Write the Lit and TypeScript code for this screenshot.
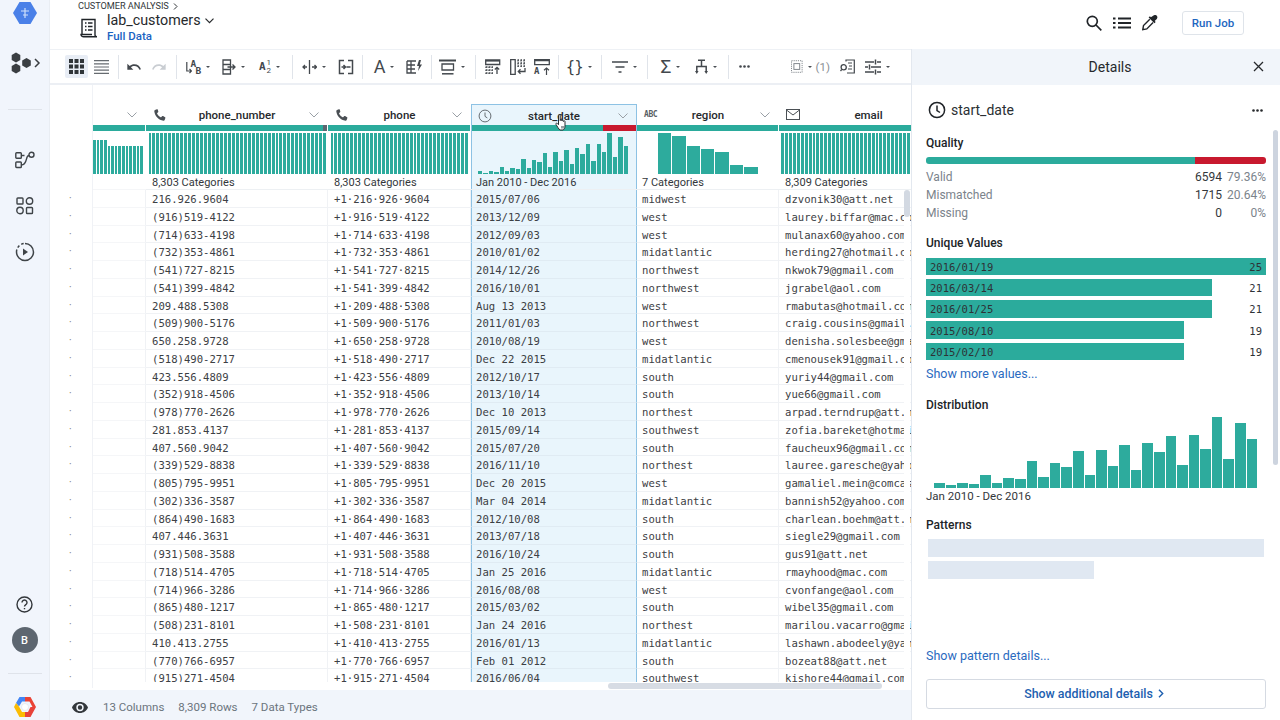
import { LitElement, html, svg, css } from "lit";
import { customElement } from "lit/decorators.js";

const phones = `216.926.9604|(916)519-4122|(714)633-4198|(732)353-4861|(541)727-8215|(541)399-4842|209.488.5308|(509)900-5176|650.258.9728|(518)490-2717|423.556.4809|(352)918-4506|(978)770-2626|281.853.4137|407.560.9042|(339)529-8838|(805)795-9951|(302)336-3587|(864)490-1683|407.446.3631|(931)508-3588|(718)514-4705|(714)966-3286|(865)480-1217|(508)231-8101|410.413.2755|(770)766-6957|(915)271-4504`.split("|");
const phone2 = phones.map((p) => {
  const d = p.replace(/\D/g, "");
  return `+1·${d.slice(0, 3)}·${d.slice(3, 6)}·${d.slice(6)}`;
});
const dates = `2015/07/06|2013/12/09|2012/09/03|2010/01/02|2014/12/26|2016/10/01|Aug 13 2013|2011/01/03|2010/08/19|Dec 22 2015|2012/10/17|2013/10/14|Dec 10 2013|2015/09/14|2015/07/20|2016/11/10|Dec 20 2015|Mar 04 2014|2012/10/08|2013/07/18|2016/10/24|Jan 25 2016|2016/08/08|2015/03/02|Jan 24 2016|2016/01/13|Feb 01 2012|2016/06/04`.split("|");
const regions = `midwest|west|west|midatlantic|northwest|northwest|west|northwest|west|midatlantic|south|south|northest|southwest|south|northest|west|midatlantic|south|south|south|midatlantic|west|south|northest|midatlantic|south|southwest`.split("|");
const emails = `dzvonik30@att.net|laurey.biffar@mac.com|mulanax60@yahoo.com|herding27@hotmail.com|nkwok79@gmail.com|jgrabel@aol.com|rmabutas@hotmail.com|craig.cousins@gmail.com|denisha.solesbee@gmail.com|cmenousek91@gmail.com|yuriy44@gmail.com|yue66@gmail.com|arpad.terndrup@att.net|zofia.bareket@hotmail.com|faucheux96@gmail.com|lauree.garesche@yahoo.com|gamaliel.mein@comcast.net|bannish52@yahoo.com|charlean.boehm@att.net|siegle29@gmail.com|gus91@att.net|rmayhood@mac.com|cvonfange@aol.com|wibel35@gmail.com|marilou.vacarro@gmail.com|lashawn.abodeely@yahoo.com|bozeat88@att.net|kishore44@gmail.com`.split("|");

const dist = [5, 2.3, 5, 4, 12.3, 5, 9.7, 8.7, 26.3, 10.3, 24.3, 20.3, 36.3, 13, 37.3, 22, 42.3, 17.7, 44.3, 35.3, 51.3, 22.7, 52.3, 39, 71, 29, 64.7, 48.7];

const fill = (n: number, h: number) => Array.from({ length: n }, () => h);

type Col = {
  name: string; w: number; icon: any; headW: number; chev: boolean; sel?: boolean; pad: number;
  bars: number[]; histL: number; histW: number; histGap: number;
  summary: string; cells: string[]; q: [number, number, number];
};

const phoneIc = html`<svg width="14" height="14" viewBox="0 0 24 24"><path fill="#4a4f54" d="M6.6 2.2 3.4 3.4c-.8.3-1.3 1.1-1.2 2 1 8.5 7.3 15 15.8 16.3.9.1 1.7-.4 2-1.2l1.2-3.3c.2-.6 0-1.2-.5-1.5l-3.400-1.900c-.6-.3-1.3-.2-1.7.3l-1.3 1.5c-.3.3-.8.4-1.2.2-2.8-1.5-4.7-3.4-6-6-.2-.4-.1-.9.2-1.2l1.400-1.300c.5-.4.6-1.100.3-1.700L8.100 2.700c-.3-.5-.9-.7-1.500-.5z"/></svg>`;
const clockIc = (s: number, c: string, sw: number) => html`<svg width="${s}" height="${s}" viewBox="0 0 18 18" fill="none" stroke="${c}" stroke-width="${sw}"><circle cx="9" cy="9" r="7.6"/><path d="M9 4.5V9.5l3 2"/></svg>`;
const abcIc = html`<span class="abc">ABC</span>`;
const mailIc = html`<svg width="14" height="11" viewBox="0 0 14 11" fill="none" stroke="#4a4f54" stroke-width="1"><rect x=".5" y=".5" width="13" height="10"/><path d="M.5 1l6.5 5 6.5-5"/></svg>`;

const columns: Col[] = [
  { name: "", w: 53, icon: null, headW: 53, pad: 6, chev: true, bars: [...fill(4, 34), ...fill(10, 28)], histL: 0, histW: 50, histGap: 1, summary: "", cells: fill(28, 0).map(() => ""), q: [1, 0, 0] },
  { name: "phone_number", w: 182, icon: phoneIc, headW: 182, pad: 6, chev: true, bars: fill(45, 41), histL: 2.5, histW: 177.5, histGap: 1, summary: "8,303 Categories", cells: phones, q: [175, 4, 0] },
  { name: "phone", w: 143, icon: phoneIc, headW: 143, pad: 6, chev: true, bars: fill(35, 41), histL: 2.5, histW: 137.5, histGap: 1, summary: "8,303 Categories", cells: phone2, q: [1, 0, 0] },
  { name: "start_date", w: 166, icon: clockIc(14, "#5d6368", 1.2), headW: 166, pad: 5, chev: true, sel: true, bars: dist.map((d) => d * 0.577), histL: 7, histW: 150, histGap: 1, summary: "Jan 2010 - Dec 2016", cells: dates, q: [131, 0, 33] },
  { name: "region", w: 142, icon: abcIc, headW: 142, pad: 5, chev: true, bars: [40.7, 38.3, 27.7, 24.7, 21.7, 9, 7], histL: 21, histW: 99.5, histGap: 1, summary: "7 Categories", cells: regions, q: [1, 0, 0] },
  { name: "email", w: 300, icon: mailIc, headW: 179, pad: 6, chev: false, bars: fill(33, 41), histL: 2, histW: 129, histGap: 1, summary: "8,309 Categories", cells: emails, q: [1, 0, 0] },
];

const caret = html`<i class="caret"></i>`;
const T = (w: number, body: any, c = false) => ({ w, body, c });
const S = (w: number) => ({ w, sep: true });
const G = (w: number) => ({ w, gap: true });
const base = (w: number, h: number, inner: any) => html`<svg width="${w}" height="${h}" viewBox="0 0 ${w} ${h}" fill="none" stroke="#43484d" stroke-width="1.3">${inner}</svg>`;

const tools: any[] = [
  T(23, html`<svg width="15" height="15" viewBox="0 0 15 15" fill="#2f3438"><rect width="4" height="4"/><rect x="5.5" width="4" height="4"/><rect x="11" width="4" height="4"/><rect y="5.5" width="4" height="4"/><rect x="5.5" y="5.5" width="4" height="4"/><rect x="11" y="5.5" width="4" height="4"/><rect y="11" width="4" height="4"/><rect x="5.5" y="11" width="4" height="4"/><rect x="11" y="11" width="4" height="4"/></svg>`),
  T(26, html`<svg width="15" height="14" viewBox="0 0 15 14" stroke="#666b70" stroke-width="1.2"><path d="M0 .6h15M0 3.8h15M0 7h15M0 10.2h15M0 13.4h15"/></svg>`),
  S(8),
  T(24, html`<svg width="16" height="16" viewBox="0 0 24 24" fill="#43484d"><path d="M12.5 8c-2.65 0-5.05.99-6.9 2.6L2 7v9h9l-3.62-3.62c1.39-1.16 3.16-1.88 5.12-1.88 3.54 0 6.55 2.31 7.6 5.5l2.37-.78C21.08 11.03 17.15 8 12.5 8z"/></svg>`),
  T(26, html`<svg width="16" height="16" viewBox="0 0 24 24" fill="#c9cdd2"><path d="M18.4 10.6C16.55 8.99 14.15 8 11.5 8c-4.65 0-8.58 3.03-9.96 7.22L3.9 16c1.05-3.19 4.05-5.5 7.6-5.5 1.95 0 3.73.72 5.12 1.88L13 16h9V7l-3.6 3.6z"/></svg>`),
  S(8),
  T(35, html`<span class="abic"><svg width="6" height="14" viewBox="0 0 6 14" fill="none" stroke="#43484d" stroke-width="1.2"><path d="M.8 2v9H5.5M3.5 9l2 2-2 2"/></svg><b class="u">A</b><b class="l">B</b></span>`, true),
  T(36, base(14, 16, svg`<path d="M1 1h7.5v14H1zM1 5.5h7M1 10.5h7M5.5 8h7.5M10.5 5.5 13 8l-2.5 2.5"/>`), true),
  T(37, html`<span class="a12"><b>A</b><span><em>1</em><em>2</em></span></span>`, true),
  S(8),
  T(35, base(15, 16, svg`<path d="M7.5 1v14M1 8h4M3 6 1 8l2 2M10 8h4.5M12.5 6l2 2-2 2"/>`), true),
  T(29, base(16, 16, svg`<path stroke-width="1.5" d="M6 1.5H1.5v13H6M10 1.5h4.5v13H10M3.5 8h4M5.5 6l2 2-2 2M12.5 8h-4"/>`)),
  S(5),
  T(38, html`<span class="bigA">A</span>`, true),
  T(22, base(16, 14, svg`<path d="M1 1h9M1 1v12h9M1 5h8M1 9h8M5 1v12"/><path fill="#43484d" stroke="none" d="M13 0l-2 6h2l-1 5 4-6.5h-2.2L15 0z"/>`)),
  S(13),
  T(28, base(17, 16, svg`<path stroke-width="2" d="M0 1.5h17"/><path d="M3 5h11.5v6H3z"/><path stroke-width="1.5" d="M3 14.8h11.5"/>`), true),
  S(18),
  T(18, base(16, 16, svg`<path d="M.7 1h14v4.5H.7z"/><path stroke-width="1.6" d="M.7 1.8h14"/><path stroke-dasharray="1.5 1.5" d="M1 7.5v8M4 7.5v8M7 7.5v8M1 8h7M1 11h7M1 14h7"/><path d="M12 15V8.5M9.8 10.5 12 8.3l2.2 2.2"/>`)),
  T(32, base(16, 16, svg`<path d="M.7.7h4.5v14.6H.7z"/><path stroke-dasharray="1.5 1.5" d="M7.5 1h8M7.5 4h8M7.5 7h8M8 1v7M11 1v7M14 1v7"/><path d="M15 9v3.5H8.5M10.5 10.3 8.3 12.5l2.2 2.2"/>`)),
  T(16, html`<span class="pv3"><svg width="16" height="7" viewBox="0 0 16 7" fill="none" stroke="#43484d" stroke-width="1.3"><path d="M.7.7h14.6v5H.7z"/><path stroke-width="1.5" d="M.7 1.5h14.6"/></svg><span><b>A</b><svg width="7" height="8" viewBox="0 0 7 8" fill="none" stroke="#43484d" stroke-width="1.2"><path d="M3.5 8V1M1 3.2 3.5 1 6 3.2"/></svg></span></span>`),
  S(16),
  T(26, html`<span class="braces">{}</span>`, true),
  S(19),
  T(26, base(16, 12, svg`<path stroke-width="1.5" d="M0 1h16M3.5 6h9M6.5 11h3"/>`), true),
  S(20),
  T(27, html`<span class="sigma">Σ</span>`, true),
  T(43, base(13, 16, svg`<path stroke-width="1.5" d="M3 1.2h7M6.5 1.2v6M1.8 13V7.5h9.4V13"/><path fill="#43484d" stroke="none" d="M0 12h3.6l-1.8 3zM9.4 12H13l-1.8 3z"/>`), true),
  S(2),
  T(31, html`<svg width="11" height="3" viewBox="0 0 11 3" fill="#43484d"><circle cx="1.5" cy="1.5" r="1.3"/><circle cx="5.5" cy="1.5" r="1.3"/><circle cx="9.5" cy="1.5" r="1.3"/></svg>`),
  G(31),
  T(39, html`<svg width="12" height="13" viewBox="0 0 12 13" fill="none" stroke="#7f858b" stroke-width="1"><rect x=".5" y=".5" width="11" height="12" stroke-dasharray="1.2 1"/><rect x="3" y="3.5" width="6" height="6"/></svg>${caret}<span class="sel1">(1)</span>`),
  T(35, base(15, 15, svg`<path stroke-width="1.2" d="M6 2.5V1h8.3v13H7M8 4h4M9 7h3M8 10h4"/><circle cx="3.7" cy="8.3" r="2.6"/><path d="M1.8 10.3 .5 12"/>`)),
  T(25, base(16, 16, svg`<path stroke-width="1.5" d="M0 3h9M12 3h4M0 8h3M6 8h10M0 13h9M12 13h4"/><path stroke-width="1.5" d="M10.5 .5v5M4.5 5.5v5M10.5 10.5v5"/>`), true),
];

@customElement("app-root")
export class AppRoot extends LitElement {
  static styles = css`
    :host { display: block; width: 1280px; height: 720px; overflow: hidden; font-family: Roboto, "Liberation Sans", sans-serif; color: #202428; background: #fff; }
    * { box-sizing: border-box; }
    .app { display: flex; width: 1280px; height: 720px; }
    .rail { width: 50px; flex: none; background: #f1f5fc; border-right: 1px solid #e9edf3; display: flex; flex-direction: column; align-items: center; }
    .ri { height: 24px; display: flex; align-items: center; justify-content: center; }
    .r-logo { margin-top: 1px; }
    .r-cluster { margin-top: 26px; width: 50px; }
    .r-sep { width: 34px; height: 1px; background: #dfe3ea; flex: none; }
    .r-sep.a { margin-top: 34px; }
    .r-flow { margin-top: 38px; }
    .r-next { margin-top: 22px; }
    .r-help { margin-top: auto; }
    .avatar { margin-top: 11px; width: 26px; height: 26px; border-radius: 50%; background: #5d6670; color: #fff; font-size: 11px; font-weight: 500; display: flex; align-items: center; justify-content: center; }
    .r-sep.b { margin-top: 20px; }
    .r-gcp { margin: 21px 0 1px; }

    .main { flex: 1; min-width: 0; display: flex; flex-direction: column; }
    .top { height: 49px; flex: none; display: flex; justify-content: space-between; padding: 0 36px 0 28px; }
    .crumb { font-size: 9.2px; letter-spacing: -.05px; line-height: 12px; color: #33373b; display: flex; align-items: center; gap: 4px; }
    .tt { display: flex; }
    .tt svg.doc { margin: 6px 9px 0 2px; }
    .title { font-size: 14.3px; line-height: 17px; display: flex; align-items: center; gap: 4px; color: #26292c; }
    .sub { font-size: 11.5px; line-height: 15px; color: #1a63c2; font-weight: 500; }
    .actions { display: flex; align-items: center; height: 45px; }
    .actions svg { display: block; }
    .act { width: 28px; display: flex; justify-content: center; }
    .run { margin-left: 18px; width: 62px; height: 24px; border: 1px solid #dfe4ea; border-radius: 3px; font-size: 11.5px; font-weight: 500; color: #1d66c0; display: flex; align-items: center; justify-content: center; }

    .body { flex: 1; min-height: 0; display: flex; }
    .work { width: 861px; flex: none; display: flex; flex-direction: column; }
    .toolbar { height: 36px; flex: none; border-top: 1px solid #eef1f5; border-bottom: 2px solid #eceff4; padding-left: 15px; display: flex; align-items: center; }
    .tool { height: 23px; display: flex; align-items: center; justify-content: center; flex: none; }
    .tool.active { background: #e8edf5; border-radius: 2px; }
    .sep { height: 24px; display: flex; justify-content: center; flex: none; }
    .sep i { width: 1px; background: #e0e4ea; display: block; }
    .caret { display: block; width: 0; height: 0; border: 2.2px solid transparent; border-top: 2.5px solid #4a4f54; border-bottom: 0; margin-left: 5px; }
    .sel1 { font-size: 11.5px; color: #8a9096; margin-left: 4px; }
    .abic { position: relative; display: block; width: 15px; height: 16px; }
    .abic svg { position: absolute; left: 0; top: 1px; }
    .abic b, .a12 b, .pv3 b { font-family: "DejaVu Sans Mono", monospace; font-weight: 700; color: #43484d; }
    .abic b { position: absolute; font-size: 9.5px; line-height: 9px; }
    .abic .u { left: 5px; top: 0; }
    .abic .l { left: 10px; top: 7px; }
    .a12 { display: flex; align-items: center; gap: 1px; }
    .a12 b { font-size: 11px; }
    .a12 span { display: flex; flex-direction: column; }
    .a12 em { font-style: normal; font-size: 8px; line-height: 8px; color: #43484d; font-family: Roboto, sans-serif; }
    .bigA { font-size: 18px; line-height: 18px; color: #43484d; }
    .braces { font-family: "DejaVu Sans Mono", monospace; font-size: 15px; line-height: 16px; color: #3a3f44; letter-spacing: -.5px; }
    .sigma { font-size: 19px; line-height: 18px; color: #43484d; }
    .pv3 { display: flex; flex-direction: column; gap: 1px; width: 16px; }
    .pv3 svg { display: block; }
    .pv3 span { display: flex; justify-content: space-between; align-items: flex-end; }
    .pv3 b { font-size: 9px; line-height: 8px; }

    .grid { position: relative; flex: 1; min-height: 0; display: flex; background: #fff; overflow: hidden; }
    .gutter { width: 43px; flex: none; border-right: 1px solid #f0f2f6; padding-top: 105px; height: 603px; overflow: hidden; }
    .dot { height: 17.76px; line-height: 17.76px; font-size: 10px; color: #777; padding-left: 19px; }
    .view { flex: 1; min-width: 0; overflow: hidden; padding-top: 19px; }
    .cols { display: flex; height: 578px; overflow: hidden; }
    .col { flex: none; height: 578px; overflow: hidden; }
    .col.sel { background: #e9f5fc; box-shadow: inset 1px 0 0 #8dc2e4, inset -1px 0 0 #8dc2e4, inset 0 1px 0 #8dc2e4; }
    .head { height: 21px; display: flex; align-items: center; padding: 0 9px 0 7px; font-size: 11.5px; font-weight: 500; color: #26292c; position: relative; }
    .col.sel .head { padding-top: 2px; }
    .h-ic { width: 15px; display: flex; align-items: center; }
    .h-name { flex: 1; text-align: center; padding-right: 3px; }
    .abc { font-family: "DejaVu Sans Mono", monospace; font-size: 8px; font-weight: 700; letter-spacing: -.4px; color: #5a5f64; }
    .qual { height: 6px; display: flex; margin-right: 1px; }
    .col.sel .qual { margin: 0 1px; }
    .qual i { display: block; }
    .q-ok { background: #2bab9c; }
    .q-un { background: #5d6670; }
    .q-bad { background: #c8192e; }
    .hist { height: 44px; display: flex; align-items: flex-end; padding-bottom: 1px; }
    .hist i { display: block; background: #2dab9d; flex: 1 1 0; min-width: 0; }
    .summary { height: 15px; line-height: 15px; font-size: 11px; color: #33373b; white-space: nowrap; border-bottom: 1px solid #edf0f3; }
    .cell { height: 17.76px; padding-top: 2px; line-height: 15.76px; font-family: "DejaVu Sans Mono", monospace; font-size: 10.6px; color: #3c4044; white-space: nowrap; border-bottom: 1px solid #f0f2f5; border-right: 1px solid #f0f2f5; overflow: hidden; }
    .col.sel .cell { border-right: 1px solid #8dc2e4; border-left: 1px solid #8dc2e4; border-bottom-color: #e0ebf3; }
    .col.first .cell, .col.first .summary { border-bottom-color: #f5f6f8; }
    .chev { flex: none; display: block; }
    .vtrack { position: absolute; right: 1px; top: 105px; bottom: 8px; width: 6px; background: #fff; }
    .vbar { position: absolute; right: 1px; top: 105px; width: 6px; height: 27px; border-radius: 3px; background: #d3d9e2; }
    .hbar { position: absolute; left: 558px; top: 598px; width: 274px; height: 6px; border-radius: 3px; background: #d7dce4; }
    .cursor { position: absolute; left: 505px; top: 29px; }
    .foot { height: 30px; flex: none; background: #f1f5fb; display: flex; align-items: center; padding: 4px 0 0 22px; font-size: 11.5px; color: #6b747d; }
    .foot svg { margin-right: 15px; }
    .foot span { margin-right: 14px; }

    .panel { position: relative; flex: 1; min-width: 0; border-left: 1px solid #e3e8ef; display: flex; flex-direction: column; }
    .p-head { height: 36px; flex: none; background: #f1f5fa; display: flex; align-items: center; justify-content: center; position: relative; font-size: 14px; color: #26292c; padding-left: 28px; }
    .p-x { position: absolute; right: 16px; top: 12px; display: block; }
    .p-body { padding: 0 14px; flex: 1; display: flex; flex-direction: column; }
    .p-title { margin-top: 13px; height: 24px; display: flex; align-items: center; font-size: 14px; color: #2b2f33; gap: 5px; padding-left: 2px; }
    .p-title svg.more { margin-left: auto; margin-right: 3px; }
    h3 { margin: 0; font-size: 12px; line-height: 16px; font-weight: 500; color: #202428; }
    .m13 { margin-top: 13px; }
    .qbar { margin-top: 6px; height: 7px; border-radius: 3px; overflow: hidden; display: flex; flex: none; }
    .stats { margin-top: 4px; }
    .stat { display: flex; height: 18px; line-height: 18px; font-size: 12px; color: #7b838b; }
    .stat span:first-child { flex: 1; }
    .stat .v { color: #33373b; }
    .stat .p { width: 44px; text-align: right; }
    .uv { margin-top: 6.5px; display: flex; flex-direction: column; gap: 3.6px; }
    .uv-row { height: 17.7px; position: relative; display: flex; align-items: center; justify-content: space-between; padding: 1px 4px 0; font-family: "DejaVu Sans Mono", monospace; font-size: 10.5px; color: #2e3236; }
    .uv-fill { position: absolute; left: 0; top: 0; bottom: 0; background: #2bab9c; }
    .uv-row span { position: relative; }
    .link { font-size: 12.5px; line-height: 16px; color: #2a6ac0; }
    .hist2 { height: 75px; padding: 0 9px 0 8px; display: flex; align-items: flex-end; gap: 1px; flex: none; }
    .hist2 i { display: block; flex: 1 1 0; background: #2dab9d; }
    .d-label { margin-top: 1px; font-size: 11.5px; line-height: 14px; color: #33373b; }
    .skel { background: #e0e8f2; height: 18px; margin-left: 2px; flex: none; }
    .btn { margin-top: 15px; height: 30px; flex: none; border: 1px solid #d5dae2; border-radius: 3px; padding-right: 4px; display: flex; align-items: center; justify-content: center; gap: 5px; font-size: 12.4px; font-weight: 500; color: #1d5fb0; }
    .pscroll { position: absolute; right: 2px; top: 81px; width: 5px; height: 335px; border-radius: 3px; background: #cdd4df; }
  `;

  private chevron() {
    return html`<svg class="chev" width="10" height="6" viewBox="0 0 10 6" fill="none" stroke="#9aa0a6" stroke-width="1"><path d="M.5.5 5 5 9.5.5"/></svg>`;
  }

  private renderCol(c: Col, i: number) {
    const bad = c.q[2];
    return html`<div class="col ${c.sel ? "sel" : ""} ${i === 0 ? "first" : ""}" style="width:${c.w}px">
      <div class="head" style="width:${c.headW}px">
        ${i > 0 ? html`<span class="h-ic">${c.icon}</span>` : ""}
        <span class="h-name">${c.name}</span>
        ${c.chev ? this.chevron() : html`<span style="width:10px"></span>`}
      </div>
      <div class="qual">
        <i class="q-ok" style="flex:${c.q[0]}"></i>
        ${c.q[1] ? html`<i class="q-un" style="flex:${c.q[1]}"></i>` : ""}
        ${bad ? html`<i class="q-bad" style="flex:${bad}"></i>` : ""}
      </div>
      <div class="hist" style="margin-left:${c.histL}px;width:${c.histW}px;gap:${c.histGap}px">
        ${c.bars.map((b) => html`<i style="height:${b}px"></i>`)}
      </div>
      <div class="summary" style="padding-left:${c.pad}px">${c.summary || "\u00a0"}</div>
      ${c.cells.map((t) => html`<div class="cell" style="padding-left:${c.sel ? c.pad - 1 : c.pad}px">${t || "\u00a0"}</div>`)}
    </div>`;
  }

  private renderRail() {
    return html`<nav class="rail">
      <div class="ri r-logo"><svg width="24" height="22" viewBox="0 0 24 22"><path fill="#4a80e8" d="M6.5 0h11L24 11l-6.5 11h-11L0 11z"/><path stroke="#cfe0fb" stroke-width="1.2" d="M12 6v10M8 9h8M10 13h5"/></svg></div>
      <div class="ri r-cluster"><svg width="34" height="24" viewBox="0 0 34 24"><g fill="#3a3e42"><path d="M8 1.5l4.3 2.5v5L8 11.5 3.7 9V4z"/><path d="M8 12.5l4.3 2.5v5L8 22.5 3.7 20v-5z"/><path d="M18.5 7l4.3 2.5v5L18.5 17l-4.3-2.5v-5z"/></g><path d="M27 8l4 4-4 4" fill="none" stroke="#3a3e42" stroke-width="1.5"/></svg></div>
      <div class="r-sep a"></div>
      <div class="ri r-flow"><svg width="20" height="18" viewBox="0 0 20 18" fill="none" stroke="#3f4448" stroke-width="1.4"><rect x=".8" y="1.8" width="5.5" height="5.5" rx=".8"/><rect x=".8" y="11" width="5.5" height="5.5" rx=".8"/><circle cx="16.5" cy="3.8" r="2.5"/><path d="M6.3 4.5h3.2M14 4.5c-4 0-1 9.5-7.700 9.5"/></svg></div>
      <div class="ri r-next"><svg width="18" height="18" viewBox="0 0 18 18" fill="none" stroke="#3f4448" stroke-width="1.4"><rect x="1" y="1" width="6" height="6" rx=".8"/><circle cx="13.5" cy="4" r="3.2"/><circle cx="4" cy="13.5" r="3.2"/><rect x="10.5" y="10.5" width="6" height="6" rx=".8"/></svg></div>
      <div class="ri r-next"><svg width="20" height="20" viewBox="0 0 20 20" fill="none" stroke="#3f4448" stroke-width="1.5"><path d="M10 1.5a8.5 8.5 0 1 1-8.5 8.5"/><path stroke-dasharray="2.5 2.2" d="M1.5 10A8.5 8.5 0 0 1 10 1.5"/><path fill="#3f4448" stroke="none" d="M8 6.5v7l5-3.5z"/></svg></div>
      <div class="ri r-help"><svg width="17" height="17" viewBox="0 0 17 17" fill="none" stroke="#33373b" stroke-width="1.4"><circle cx="8.5" cy="8.5" r="7.5"/><path d="M6 6.5a2.5 2.5 0 1 1 3.8 2.1c-.9.6-1.300 1-1.300 2"/><path d="M8.5 12v1.3"/></svg></div>
      <div class="avatar">B</div>
      <div class="r-sep b"></div>
      <div class="ri r-gcp"><svg width="22" height="20" viewBox="0 0 22 20"><path fill="#ea4335" d="M11 0h5.5L22 10l-3.5 0-3-5.5H11z"/><path fill="#4285f4" d="M5.5 0H11v4.5H8L5 9.5 2 6z"/><path fill="#fbbc04" d="M0 10l2-4 3 3.5L8 15h3v5H5.5z"/><path fill="#e8423a" d="M22 10l-5.5 10H11v-5h3l2.5-5z"/><circle cx="11" cy="10" r="3.5" fill="#fff"/><circle cx="11" cy="10" r="3.5" fill="none" stroke="#d9dde3" stroke-width=".5"/></svg></div>
    </nav>`;
  }

  private renderTop() {
    return html`<header class="top">
      <div>
        <div class="crumb">CUSTOMER ANALYSIS <svg width="5" height="7" viewBox="0 0 5 7" fill="none" stroke="#33373b" stroke-width="1"><path d="M1 .5l3 3-3 3"/></svg></div>
        <div class="tt">
          <svg class="doc" width="18" height="20" viewBox="0 0 18 20" fill="none" stroke="#202428" stroke-width="1.4"><path d="M2 16V1.5h13V17c0 1 .8 1.8 2 1.8H3.5C2.5 18.8 1 18 1 16.5h11"/><path d="M5 5h1.5M8 5h4.5M5 8.5h1.5M8 8.5h4.5M5 12h1.5M8 12h4.5"/></svg>
          <div>
            <div class="title">lab_customers <svg width="9" height="6" viewBox="0 0 9 6" fill="none" stroke="#26292c" stroke-width="1.2"><path d="M.5.7 4.5 4.7 8.5.7"/></svg></div>
            <div class="sub">Full Data</div>
          </div>
        </div>
      </div>
      <div class="actions">
        <span class="act"><svg width="16" height="16" viewBox="0 0 16 16" fill="none" stroke="#202428" stroke-width="1.7"><circle cx="6.3" cy="6.3" r="5"/><path d="M10 10l5.3 5.3"/></svg></span>
        <span class="act"><svg width="18" height="12" viewBox="0 0 18 12" fill="none" stroke="#202428" stroke-width="1.8"><path d="M5 1.5h13M5 6h13M5 10.5h13M0 1.5h2.5M0 6h2.5M0 10.5h2.5"/></svg></span>
        <span class="act"><svg width="16" height="16" viewBox="0 0 16 16"><path fill="#202428" d="M11.5.5c1-.8 2.5-.7 3.3.2.8.9.8 2.3 0 3.2L12.700 6l1 1-1.300 1.300-5.800-5.800L7.900 1.200l1 1z"/><path fill="none" stroke="#202428" stroke-width="1.4" d="M7.800 4.300 1.500 10.600.8 14.600l4-.7L11.100 7.600"/></svg></span>
        <div class="run">Run Job</div>
      </div>
    </header>`;
  }

  private renderToolbar() {
    return html`<div class="toolbar">
      ${tools.map((t, i) => {
        if (t.sep) return html`<span class="sep" style="width:${t.w}px"><i></i></span>`;
        if (t.gap) return html`<span style="width:${t.w}px;flex:none"></span>`;
        return html`<span class="tool ${i === 0 ? "active" : ""}" style="width:${t.w}px">${t.body}${t.c ? caret : ""}</span>`;
      })}
    </div>`;
  }

  private renderPanel() {
    const uv: [string, string, number][] = [["2016/01/19", "25", 340], ["2016/03/14", "21", 286], ["2016/01/25", "21", 286], ["2015/08/10", "19", 258], ["2015/02/10", "19", 258]];
    return html`<aside class="panel">
      <div class="p-head">Details
        <svg class="p-x" width="11" height="11" viewBox="0 0 11 11" fill="none" stroke="#26292c" stroke-width="1.3"><path d="M1 1l9 9M10 1l-9 9"/></svg>
      </div>
      <div class="p-body">
        <div class="p-title">${clockIc(18, "#202428", 1.5)}<span>start_date</span>
          <svg class="more" width="11" height="3" viewBox="0 0 11 3" fill="#26292c"><circle cx="1.5" cy="1.5" r="1.3"/><circle cx="5.5" cy="1.5" r="1.3"/><circle cx="9.5" cy="1.5" r="1.3"/></svg>
        </div>
        <h3 class="m13">Quality</h3>
        <div class="qbar"><i style="flex:269;background:#2bab9c"></i><i style="flex:71;background:#c8192e"></i></div>
        <div class="stats">
          <div class="stat"><span>Valid</span><span class="v">6594</span><span class="p">79.36%</span></div>
          <div class="stat"><span>Mismatched</span><span class="v">1715</span><span class="p">20.64%</span></div>
          <div class="stat"><span>Missing</span><span class="v">0</span><span class="p">0%</span></div>
        </div>
        <h3 class="m13">Unique Values</h3>
        <div class="uv">
          ${uv.map(([d, n, w]) => html`<div class="uv-row"><i class="uv-fill" style="width:${w}px"></i><span>${d}</span><span>${n}</span></div>`)}
        </div>
        <div class="link" style="margin-top:6px">Show more values...</div>
        <h3 style="margin-top:14.3px">Distribution</h3>
        <div class="hist2">${dist.map((d) => html`<i style="height:${d}px"></i>`)}</div>
        <div class="d-label">Jan 2010 - Dec 2016</div>
        <h3 style="margin-top:14px">Patterns</h3>
        <div class="skel" style="margin-top:6px;width:336px"></div>
        <div class="skel" style="margin-top:4px;width:166px"></div>
        <div class="link" style="margin-top:69px">Show pattern details...</div>
        <div class="btn">Show additional details <svg width="6" height="9" viewBox="0 0 6 9" fill="none" stroke="#1d5fb0" stroke-width="1.4"><path d="M1 .8 4.7 4.5 1 8.2"/></svg></div>
      </div>
      <div class="pscroll"></div>
    </aside>`;
  }

  render() {
    return html`<div class="app">
      ${this.renderRail()}
      <div class="main">
        ${this.renderTop()}
        <div class="body">
          <section class="work">
            ${this.renderToolbar()}
            <div class="grid">
              <div class="gutter">${phones.map(() => html`<div class="dot">·</div>`)}</div>
              <div class="view"><div class="cols">${columns.map((c, i) => this.renderCol(c, i))}</div></div>
              <div class="vtrack"></div>
              <div class="vbar"></div>
              <div class="hbar"></div>
              <svg class="cursor" width="13" height="17" viewBox="0 0 13 17"><path fill="#fff" stroke="#2a2d30" stroke-width="1" d="M3.5 1.5c0-1 1.7-1 1.7 0v5c0-1 1.6-1 1.6 0v.5c0-1 1.6-1 1.6 0v.5c0-1 1.6-1 1.6 0v4.500c0 2-1 3.500-2 4H5c-1-.5-3-4-4-5.500-.6-1 .6-1.800 1.400-1l1.100 1.200z"/><path d="M6 12h3v2.5H6z" fill="#9a9ea3"/></svg>
            </div>
            <footer class="foot">
              <svg width="16" height="11" viewBox="0 0 16 11"><path fill="#33373b" d="M8 0C4.400 0 1.400 2.200 0 5.500 1.400 8.800 4.400 11 8 11s6.600-2.200 8-5.500C14.600 2.200 11.600 0 8 0zm0 9.200a3.700 3.700 0 1 1 0-7.400 3.700 3.700 0 0 1 0 7.400zM8 3.300a2.200 2.200 0 1 0 0 4.400 2.200 2.200 0 0 0 0-4.400z"/></svg>
              <span>13 Columns</span><span>8,309 Rows</span><span>7 Data Types</span>
            </footer>
          </section>
          ${this.renderPanel()}
        </div>
      </div>
    </div>`;
  }
}
